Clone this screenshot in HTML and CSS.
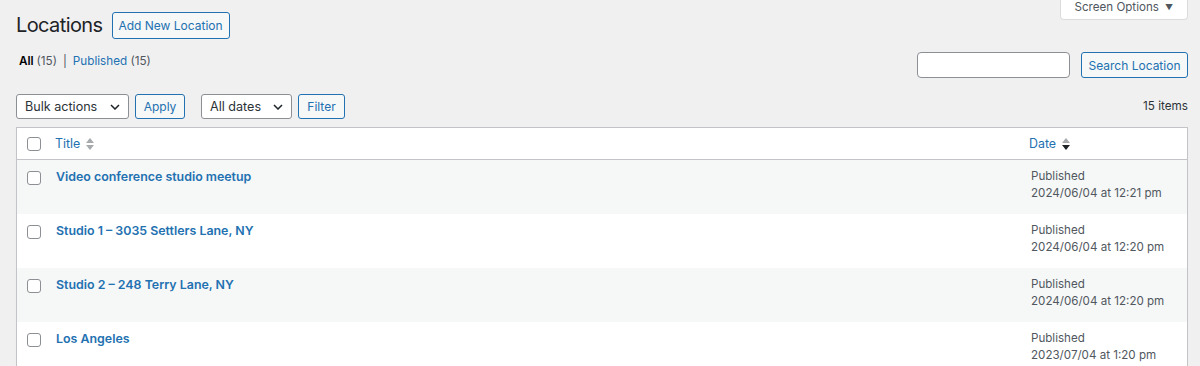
FILE: index.html
```html
<!DOCTYPE html>
<html lang="en">
<head>
<meta charset="utf-8">
<title>Locations</title>
<link rel="stylesheet" href="styles.css">
</head>
<body>
<div class="wrap">
  <div class="screen-tab">Screen Options <span class="tab-arrow">&#9660;</span></div>

  <div class="title-row">
    <h1 class="page-title">Locations</h1>
    <a class="btn btn-add" href="#">Add New Location</a>
  </div>

  <div class="views-row">
    <ul class="views">
      <li class="current">All <span class="count">(15)</span></li>
      <li class="sep">|</li>
      <li><a href="#">Published</a> <span class="count">(15)</span></li>
    </ul>
    <div class="search-box">
      <input class="search-input" type="search" aria-label="Search Location">
      <button class="btn btn-search">Search Location</button>
    </div>
  </div>

  <div class="tablenav">
    <div class="select select-bulk">Bulk actions
      <svg class="chev" width="10" height="6" viewBox="0 0 10 6"><path d="M1 1l4 4 4-4" fill="none" stroke="#1d2327" stroke-width="1.5"/></svg>
    </div>
    <button class="btn btn-small btn-apply">Apply</button>
    <div class="select select-dates">All dates
      <svg class="chev" width="10" height="6" viewBox="0 0 10 6"><path d="M1 1l4 4 4-4" fill="none" stroke="#1d2327" stroke-width="1.5"/></svg>
    </div>
    <button class="btn btn-small btn-filter">Filter</button>
    <div class="items-count">15 items</div>
  </div>

  <div class="list-table">
    <div class="row head">
      <div class="cell cb"><span class="checkbox"></span></div>
      <div class="cell title head-title"><a href="#">Title</a>
        <svg class="sort" width="8" height="12" viewBox="0 0 8 12"><path d="M4 0L8 5H0z" fill="#a7aaad"/><path d="M4 12L8 7H0z" fill="#a7aaad"/></svg>
      </div>
      <div class="cell date head-date"><a href="#">Date</a>
        <svg class="sort" width="8" height="12" viewBox="0 0 8 12"><path d="M4 0L8 5H0z" fill="#a7aaad"/><path d="M4 12L8 7H0z" fill="#1d2327"/></svg>
      </div>
    </div>

    <div class="row alt">
      <div class="cell cb"><span class="checkbox"></span></div>
      <div class="cell title"><a class="row-title" href="#">Video conference studio meetup</a></div>
      <div class="cell date">Published<br>2024/06/04 at 12:21 pm</div>
    </div>
    <div class="row">
      <div class="cell cb"><span class="checkbox"></span></div>
      <div class="cell title"><a class="row-title" href="#">Studio 1 – 3035 Settlers Lane, NY</a></div>
      <div class="cell date">Published<br>2024/06/04 at 12:20 pm</div>
    </div>
    <div class="row alt">
      <div class="cell cb"><span class="checkbox"></span></div>
      <div class="cell title"><a class="row-title" href="#">Studio 2 – 248 Terry Lane, NY</a></div>
      <div class="cell date">Published<br>2024/06/04 at 12:20 pm</div>
    </div>
    <div class="row">
      <div class="cell cb"><span class="checkbox"></span></div>
      <div class="cell title"><a class="row-title" href="#">Los Angeles</a></div>
      <div class="cell date">Published<br>2023/07/04 at 1:20 pm</div>
    </div>
  </div>
</div>
</body>
</html>
```

FILE: styles.css
```css
* { box-sizing: border-box; }

html, body {
  margin: 0;
  padding: 0;
  background: #f0f0f1;
  color: #1d2327;
  font-family: Inter, "Noto Sans", "Liberation Sans", sans-serif;
  font-size: 12px;
  line-height: 17px;
}

a { color: #2271b1; text-decoration: none; }

.wrap {
  padding: 0 12px 0 16px;
}

.screen-tab {
  float: right;
  height: 21px;
  padding: 0 14px 0 14px;
  margin-top: -1px;
  background: #fff;
  border: 1px solid #dcdcde;
  border-top: none;
  border-radius: 0 0 4px 4px;
  color: #50575e;
  font-size: 11.6px;
  line-height: 16px;
  display: flex;
  align-items: flex-start;
  gap: 6px;
  white-space: nowrap;
}
.tab-arrow { font-size: 8px; line-height: 17px; }

.title-row {
  display: flex;
  align-items: center;
  gap: 9px;
  padding-top: 12px;
}

.page-title {
  margin: 0;
  font-size: 20px;
  font-weight: 400;
  line-height: 27px;
  color: #1d2327;
  letter-spacing: -0.6px;
  white-space: nowrap;
}

.btn {
  display: inline-flex;
  align-items: center;
  justify-content: center;
  border: 1px solid #2271b1;
  border-radius: 3px;
  background: #f6f7f7;
  color: #2271b1;
  font-family: inherit;
  font-size: 12px;
  line-height: 17px;
  padding: 0 6px;
  cursor: pointer;
  white-space: nowrap;
}

.btn-add { height: 27px; width: 118px; }

.views-row {
  display: flex;
  justify-content: space-between;
  align-items: flex-start;
  margin-top: 13px;
}

.views {
  list-style: none;
  margin: 1px 0 0 0;
  padding: 0 0 0 3px;
  display: flex;
  gap: 5px;
  font-size: 11.7px;
  line-height: 17px;
}
.views .current { font-weight: 600; color: #000; }
.views .count { color: #50575e; font-weight: 400; }
.views .sep { color: #50575e; padding: 0 1px; }

.search-box {
  display: flex;
  gap: 11px;
}
.search-input {
  width: 153px;
  height: 26px;
  border: 1px solid #8c8f94;
  border-radius: 4px;
  background: #fff;
  margin: 0;
}
.btn-search { height: 26px; width: 107px; }

.tablenav {
  display: flex;
  align-items: center;
  margin-top: 16px;
  height: 25px;
}

.select {
  height: 25px;
  border: 1px solid #8c8f94;
  border-radius: 3px;
  background: #fff;
  color: #2c3338;
  font-size: 12.6px;
  display: flex;
  align-items: center;
  justify-content: space-between;
  padding: 0 8px 0 8px;
  white-space: nowrap;
}
.select-bulk { width: 113px; }
.select-dates { width: 91px; margin-left: 16px; }
.chev { display: block; }

.btn-small { height: 25px; margin-left: 6px; }
.btn-apply { width: 50px; }
.btn-filter { width: 47px; }

.items-count {
  margin-left: auto;
  color: #2c3338;
  font-size: 11.7px;
}

.list-table {
  margin-top: 8px;
  background: #fff;
  border: 1px solid #c3c4c7;
  box-shadow: 0 1px 1px rgba(0, 0, 0, 0.04);
}

.row {
  display: grid;
  grid-template-columns: 28px 1fr 168px;
  background: #fff;
}
.row.alt { background: #f6f7f7; }
.row.head { border-bottom: 1px solid #c3c4c7; }

.cell {
  padding: 8px 10px 12px 10px;
  line-height: 17px;
}
.head .cell { padding: 7px 10px 7px 10px; }

.cb { padding-left: 10px; padding-right: 0; }
.checkbox {
  display: block;
  width: 14px;
  height: 14px;
  border: 1px solid #8c8f94;
  border-radius: 3px;
  background: #fff;
  margin-top: 3px;
}
.head .checkbox { margin-top: 2px; }

.title { padding-left: 11px; }
.head-title { padding-left: 10px; display: flex; align-items: center; gap: 6px; }
.head-date { padding-left: 10px; display: flex; align-items: center; gap: 6px; }
.date { padding-left: 12px; color: #50575e; font-size: 11.6px; }

.head a { font-size: 12.4px; }

.row-title {
  font-weight: 600;
  font-size: 12.4px;
}
```
